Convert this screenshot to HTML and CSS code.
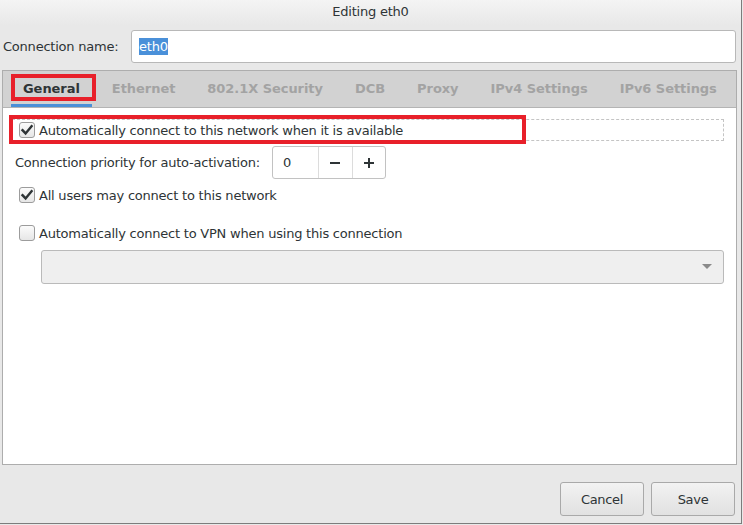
FILE: index.html
```html
<!DOCTYPE html>
<html>
<head>
<meta charset="utf-8">
<title>Editing eth0</title>
<link rel="stylesheet" href="styles.css">
</head>
<body>
<div class="window">
  <div class="titlebar">Editing eth0</div>
  <div class="name-row">
    <label class="name-label">Connection name:</label>
    <div class="entry"><span class="sel">eth0</span></div>
  </div>
  <div class="notebook">
    <div class="tabs">
      <div class="tab active">General</div>
      <div class="tab">Ethernet</div>
      <div class="tab">802.1X Security</div>
      <div class="tab">DCB</div>
      <div class="tab">Proxy</div>
      <div class="tab">IPv4 Settings</div>
      <div class="tab">IPv6 Settings</div>
    </div>
    <div class="page">
      <div class="focus-row">
        <span class="check checked"><svg viewBox="0 0 16 16" width="16" height="16"><path d="M3.5 8.2 L6.6 11.4 L12.6 4.2" fill="none" stroke="#2e3436" stroke-width="2.4" stroke-linecap="square"/></svg></span>
        <span class="check-text">Automatically connect to this network when it is available</span>
      </div>
      <div class="prio-row">
        <span class="prio-label">Connection priority for auto-activation:</span>
        <div class="spin">
          <span class="spin-value">0</span>
          <span class="spin-btn"><svg width="12" height="12" viewBox="0 0 12 12"><rect x="1" y="5" width="10" height="2" fill="#2e3436"/></svg></span>
          <span class="spin-btn"><svg width="12" height="12" viewBox="0 0 12 12"><rect x="1" y="5" width="10" height="2" fill="#2e3436"/><rect x="5" y="1" width="2" height="10" fill="#2e3436"/></svg></span>
        </div>
      </div>
      <div class="check-row users-row">
        <span class="check checked"><svg viewBox="0 0 16 16" width="16" height="16"><path d="M3.5 8.2 L6.6 11.4 L12.6 4.2" fill="none" stroke="#2e3436" stroke-width="2.4" stroke-linecap="square"/></svg></span>
        <span class="check-text">All users may connect to this network</span>
      </div>
      <div class="check-row vpn-row">
        <span class="check"></span>
        <span class="check-text">Automatically connect to VPN when using this connection</span>
      </div>
      <div class="combo">
        <svg width="10" height="6" viewBox="0 0 10 6"><path d="M0 0 L10 0 L5 5 Z" fill="#8a8a8a"/></svg>
      </div>
    </div>
  </div>
  <div class="actions">
    <button class="btn">Cancel</button>
    <button class="btn">Save</button>
  </div>
  <div class="mark mark-tab"></div>
  <div class="mark mark-row"></div>
</div>
</body>
</html>
```
FILE: styles.css
```css
html, body {
  margin: 0;
  padding: 0;
  background: #e8e8e8;
}
body {
  font-family: "DejaVu Sans", "Liberation Sans", sans-serif;
  font-size: 13px;
  letter-spacing: -0.22px;
  color: #2e3436;
}
.window {
  position: relative;
  width: 741px;
  height: 523px;
  border-right: 1px solid #7c7c7c;
  border-bottom: 1px solid #7c7c7c;
  background: #e8e8e8;
  display: flex;
  flex-direction: column;
}
.titlebar {
  height: 25px;
  line-height: 24px;
  text-align: center;
  background: linear-gradient(#f4f4f4, #e8e8e8);
  color: #2e3436;
}
.name-row {
  display: flex;
  align-items: center;
  margin-top: 5px;
  padding-left: 3px;
}
.name-label {
  width: 128px;
}
.entry {
  box-sizing: border-box;
  width: 605px;
  height: 33px;
  background: #fff;
  border: 1px solid #b8b8b8;
  border-radius: 3px;
  display: flex;
  align-items: center;
  padding-left: 7px;
}
.sel {
  background: #4a90d9;
  color: #fff;
  line-height: 17px;
}
.notebook {
  margin-top: 7px;
  margin-left: 2px;
  box-sizing: border-box;
  width: 735px;
  height: 395px;
  border: 1px solid #adadad;
  display: flex;
  flex-direction: column;
}
.tabs {
  height: 36px;
  background: #d2d2d2;
  border-bottom: 1px solid #b4b4b4;
  display: flex;
  gap: 8px;
  padding-left: 8px;
}
.tab {
  padding: 0 12px;
  font-weight: bold;
  letter-spacing: -0.05px;
  color: #a3a3a3;
  line-height: 36px;
  border-bottom: 3px solid transparent;
  height: 33px;
}
.tab.active {
  color: #2e3436;
  border-bottom-color: #4a90d9;
}
.page {
  flex: 1;
  background: #fff;
  padding: 11px 12px 0 9px;
}
.focus-row {
  box-sizing: border-box;
  height: 22px;
  border: 1px dashed #c4c4c4;
  display: flex;
  align-items: center;
  padding-left: 6px;
}
.check {
  box-sizing: border-box;
  width: 16px;
  height: 16px;
  border: 1px solid #9c9c9c;
  border-radius: 3px;
  background: linear-gradient(#fbfbfb, #e6e6e6);
  display: inline-flex;
  margin-right: 4px;
  flex: none;
}
.check svg {
  margin: -1px;
}
.prio-row {
  margin-top: 5px;
  display: flex;
  align-items: center;
  padding-left: 3px;
}
.prio-label {
  width: 257px;
}
.spin {
  box-sizing: border-box;
  width: 114px;
  height: 33px;
  border: 1px solid #c2c2c2;
  border-radius: 3px;
  display: flex;
  background: #fff;
}
.spin-value {
  width: 46px;
  padding-left: 10px;
  box-sizing: border-box;
  line-height: 31px;
}
.spin-btn {
  width: 33px;
  border-left: 1px solid #dcdcdc;
  display: flex;
  align-items: center;
  justify-content: center;
}
.check-row {
  display: flex;
  align-items: center;
  padding-left: 7px;
  height: 16px;
}
.users-row {
  margin-top: 8px;
}
.vpn-row {
  margin-top: 22px;
}
.combo {
  box-sizing: border-box;
  margin-top: 9px;
  margin-left: 29px;
  width: 683px;
  height: 34px;
  background: #efefef;
  border: 1px solid #bababa;
  border-radius: 3px;
  display: flex;
  align-items: center;
  justify-content: flex-end;
  padding-right: 11px;
}
.actions {
  display: flex;
  justify-content: flex-end;
  gap: 7px;
  margin-top: 17px;
  padding-right: 6px;
}
.btn {
  box-sizing: border-box;
  width: 84px;
  height: 34px;
  font-family: "DejaVu Sans", sans-serif;
  font-size: 13px;
  letter-spacing: -0.3px;
  color: #2e3436;
  border: 1px solid #a9a9a9;
  border-radius: 3px;
  background: linear-gradient(#f2f2f2, #e1e1e1);
  padding: 0;
}
.mark {
  position: absolute;
  border: 4px solid #e8202a;
  box-sizing: border-box;
}
.mark-tab {
  left: 11px;
  top: 74px;
  width: 85px;
  height: 27px;
}
.mark-row {
  left: 9px;
  top: 115px;
  width: 517px;
  height: 29px;
}
```
